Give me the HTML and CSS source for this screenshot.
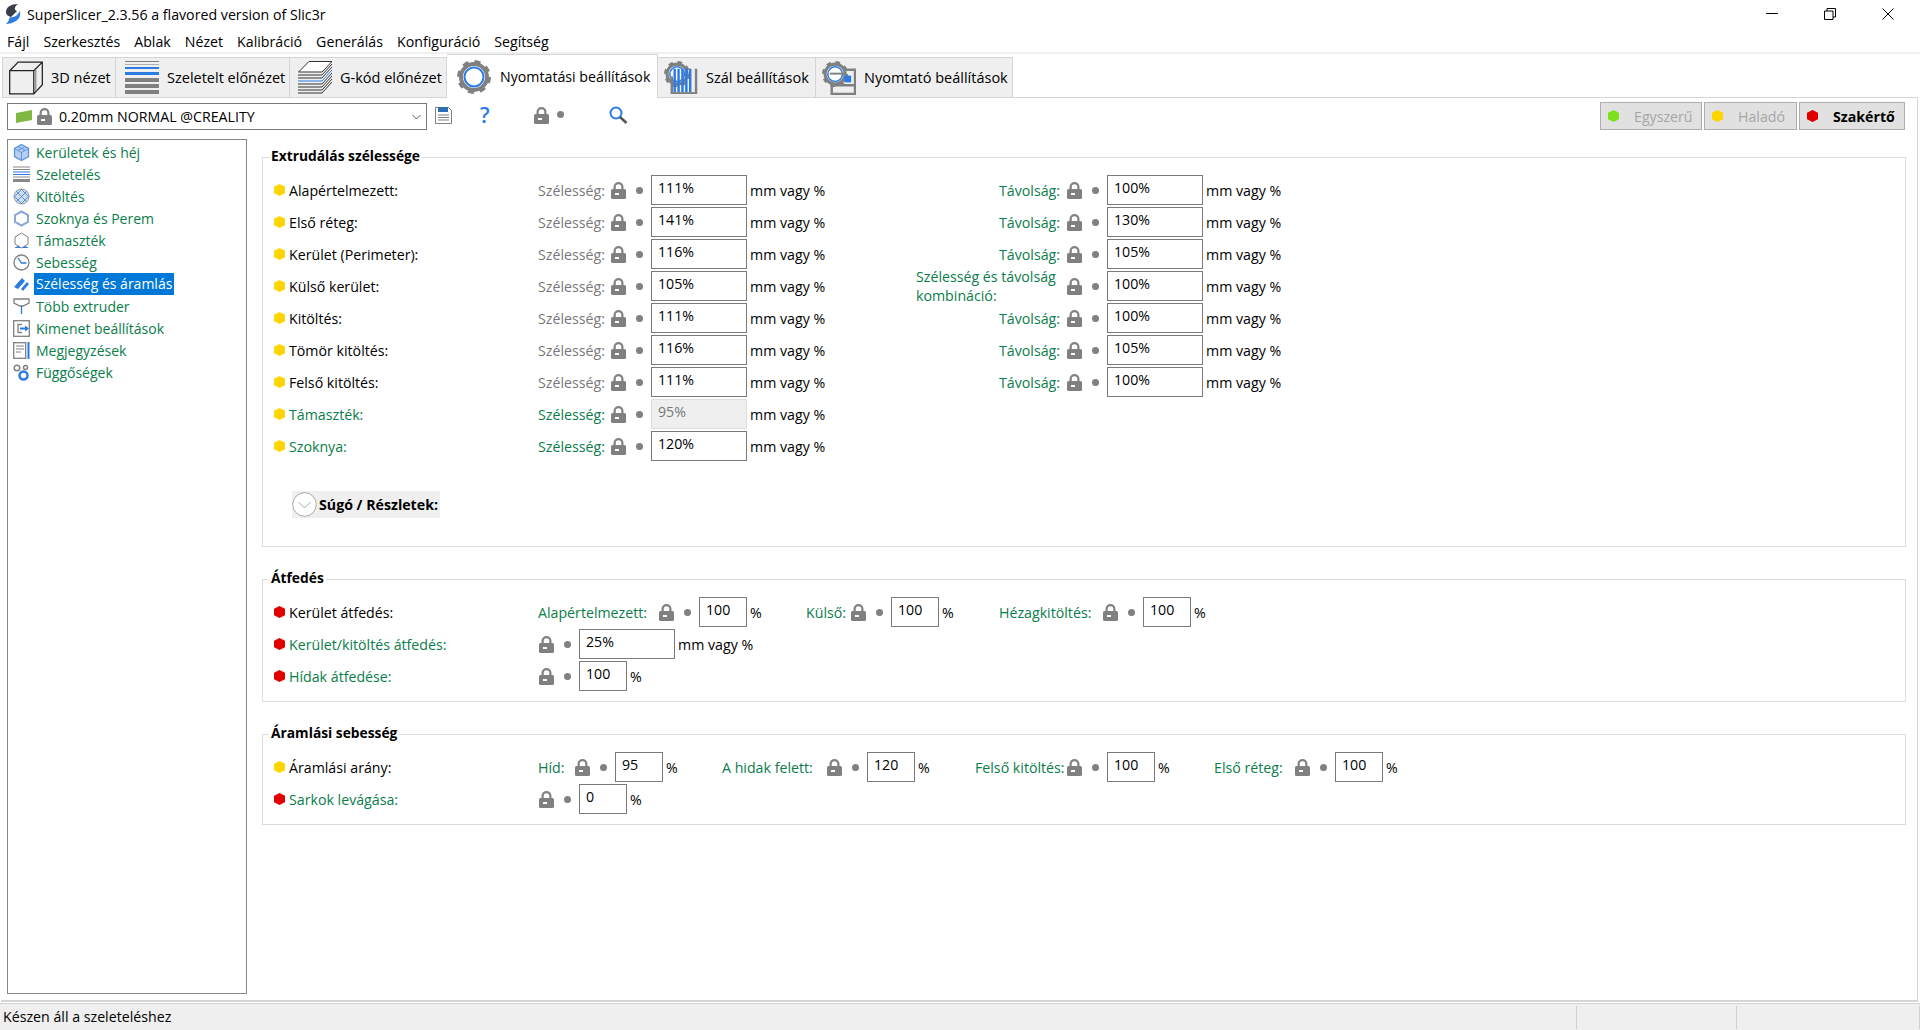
FILE: index.html
```html
<!DOCTYPE html>
<html lang="hu">
<head>
    <meta charset="UTF-8">
    <title>SuperSlicer_2.3.56 a flavored version of Slic3r</title>
    <link rel="stylesheet" href="styles.css">
</head>
<body>
<svg class="defs" width="0" height="0">
    <defs>
        <symbol id="lock" viewBox="0 0 15 17">
            <path d="M2.5 7V5a5 5 0 0 1 10 0v2h-2.200V5a2.800 2.800 0 0 0-5.600 0v2z" fill="#808080"/>
            <rect x="0" y="7" width="15" height="10" rx="1.500" fill="#808080"/>
            <rect x="4" y="11" width="4" height="2" fill="#fff"/>
        </symbol>
        <symbol id="gear" viewBox="0 0 34 34">
            <circle cx="17" cy="17" r="15" fill="none" stroke="#808080" stroke-width="4" stroke-dasharray="5.900 5.880"/>
            <circle cx="17" cy="17" r="13" fill="#fff" stroke="#808080" stroke-width="4"/>
            <circle cx="17" cy="17" r="9.500" fill="#fff" stroke="#2c7be5" stroke-width="2"/>
        </symbol>
    </defs>
</svg>

<header class="titlebar">
    <svg class="app-icon" viewBox="0 0 16 20">
        <path d="M13 0C6 0 1 3 1 8c0 3 2 4 5 5l6-6C9 6 9 3 13 0z" fill="#3a3f47"/>
        <path d="M15 7c1 5-1 8-4 10-3 2-7 3-10 3 2-2 3-4 4-7 4 1 7-1 10-6z" fill="#2f7de1"/>
    </svg>
    <span class="app-title">SuperSlicer_2.3.56 a flavored version of Slic3r</span>
    <div class="win-buttons">
        <svg viewBox="0 0 12 12" width="12" height="12"><path d="M0 5.500h12" stroke="#000" fill="none"/></svg>
        <svg viewBox="0 0 12 12" width="12" height="12"><path d="M.5 3h8.500v8.500H.5zM3 3V.5h8.500V9H9" stroke="#000" fill="none"/></svg>
        <svg viewBox="0 0 12 12" width="12" height="12"><path d="M.5.5l11 11M11.500.5l-11 11" stroke="#000" fill="none"/></svg>
    </div>
</header>

<nav class="menubar">
    <span>Fájl</span><span>Szerkesztés</span><span>Ablak</span><span>Nézet</span><span>Kalibráció</span><span>Generálás</span><span>Konfiguráció</span><span>Segítség</span>
</nav>

<div class="tabs">
    <div class="tab tab-3d">
        <svg class="tab-icon" viewBox="0 0 35 34">
            <path d="M.7 9.500L9.500.7h24.800V24L25.500 33.300H.7zM.7 9.500h24.800v23.800M25.500 9.500L34.300.7" fill="none" stroke="#222" stroke-width="1.300"/>
            <path d="M27.500 8.500v22" stroke="#999" stroke-width="1.500"/>
        </svg>
        <span>3D nézet</span>
    </div>
    <div class="tab tab-slice">
        <svg class="tab-icon" viewBox="0 0 34 34">
            <rect y="0" width="34" height="1" fill="#808080"/>
            <rect y="3" width="34" height="1" fill="#b0b0b0"/>
            <rect y="6" width="34" height="2" fill="#2c7be5"/>
            <rect y="11" width="34" height="3" fill="#2c7be5"/>
            <rect y="17" width="34" height="4" fill="#808080"/>
            <rect y="23" width="34" height="4" fill="#808080"/>
            <rect y="29" width="34" height="4" fill="#808080"/>
        </svg>
        <span>Szeletelt előnézet</span>
    </div>
    <div class="tab tab-gcode">
        <svg class="tab-icon" viewBox="0 0 34 34">
            <path d="M11 .5h23L24 11H.5z" fill="#fff" stroke="#333"/>
            <path d="M34 3L24 14H0M34 6L24 17H0" fill="none" stroke="#333"/>
            <path d="M34 9L24 20H0" fill="none" stroke="#2c7be5"/>
            <path d="M34 12L24 23H0M34 15L24 26H0M34 18L24 29H0M34 21L24 32H0" fill="none" stroke="#333"/>
        </svg>
        <span>G-kód előnézet</span>
    </div>
    <div class="tab tab-print active">
        <svg class="tab-icon"><use href="#gear"/></svg>
        <span>Nyomtatási beállítások</span>
    </div>
    <div class="tab tab-fil">
        <svg class="tab-icon" viewBox="0 0 35 35">
            <use href="#gear" width="27" height="27"/>
            <path d="M11 8v24M15 8v24M19 8v24M23 8v24M27 8v24" stroke="#2c7be5" stroke-width="2.500"/>
            <path d="M8 34V16M33 34V8" stroke="#808080" stroke-width="2.500"/>
            <path d="M8 33h25" stroke="#808080" stroke-width="2"/>
        </svg>
        <span>Szál beállítások</span>
    </div>
    <div class="tab tab-printer">
        <svg class="tab-icon" viewBox="0 0 35 35">
            <use href="#gear" width="27" height="27"/>
            <path d="M10 21v13h24V9H24M10 25h24" fill="none" stroke="#808080" stroke-width="2.500"/>
            <path d="M8 13h16" stroke="#808080" stroke-width="2"/>
            <rect x="23" y="15" width="7" height="7" fill="#2c7be5"/>
        </svg>
        <span>Nyomtató beállítások</span>
    </div>
    <div class="tabs-rest"></div>
</div>

<div class="page">
    <div class="toolbar">
        <div class="combo">
            <svg class="flag" viewBox="0 0 16 13"><path d="M0 3l16-3v10L0 13z" fill="#7fb842"/></svg>
            <svg class="lock"><use href="#lock"/></svg>
            <span class="combo-text">0.20mm NORMAL @CREALITY</span>
            <svg class="chevron" viewBox="0 0 9 6"><path d="M.5 1l4 4 4-4" fill="none" stroke="#555"/></svg>
        </div>
        <svg class="tool-save" viewBox="0 0 17 17">
            <path d="M.5.5h13l3 3v13H.5z" fill="#fff" stroke="#808080"/>
            <rect x="3" y="0" width="10" height="5" fill="#2c6fb5"/>
            <path d="M3 8h11M3 10.500h11M3 13h11" stroke="#808080"/>
        </svg>
        <span class="tool-help">?</span>
        <svg class="lock tool-lock"><use href="#lock"/></svg>
        <i class="dot tool-dot"></i>
        <svg class="tool-search" viewBox="0 0 19 18">
            <circle cx="7" cy="7" r="5.500" fill="none" stroke="#2c7be5" stroke-width="2"/>
            <path d="M11 11l6.500 6" stroke="#555" stroke-width="2.500"/>
        </svg>
        <div class="modes">
            <button class="mode mode-simple"><i class="hex green"></i>Egyszerű</button>
            <button class="mode mode-adv"><i class="hex yellow"></i>Haladó</button>
            <button class="mode mode-expert"><i class="hex red"></i>Szakértő</button>
        </div>
    </div>

    <div class="content">
        <ul class="tree">
            <li><svg class="ti" viewBox="0 0 17 17"><path d="M8.500.5l7 4v8l-7 4-7-4v-8z" fill="#b8d0f0" stroke="#5a94e0" stroke-width="1.300"/><path d="M1.500 4.500l7 4 7-4M8.500 8.500v8M5 2.500l7 4M12 2.500l-7 4" fill="none" stroke="#5a94e0"/></svg>Kerületek és héj</li>
            <li><svg class="ti" viewBox="0 0 17 17"><path d="M0 1h17M0 3.500h17" stroke="#888"/><path d="M0 6h17M0 8.500h17" stroke="#2c7be5"/><path d="M0 11h17" stroke="#888"/><path d="M0 14.500h17" stroke="#888" stroke-width="3"/></svg>Szeletelés</li>
            <li><svg class="ti" viewBox="0 0 17 17"><circle cx="8.500" cy="8.500" r="7.500" fill="#d0dcec" stroke="#999"/><path d="M3 3l11 11M8 1l7 7M1 8l7 7M14 3L3 14M9 1L1 9M16 8l-8 8" stroke="#5a94e0"/></svg>Kitöltés</li>
            <li><svg class="ti" viewBox="0 0 17 17"><path d="M8.500 1.500l6.500 3.500v7l-6.500 3.500L2 12V5z" fill="none" stroke="#8aa8d8" stroke-width="2"/></svg>Szoknya és Perem</li>
            <li><svg class="ti" viewBox="0 0 17 17"><path d="M8.500 1L15 5v7l-6.500 4L2 12V5z" fill="none" stroke="#808080"/><path d="M1 16l4-2 3 2zM9 16l3-2 4 2z" fill="#2c7be5"/></svg>Támaszték</li>
            <li><svg class="ti" viewBox="0 0 17 17"><circle cx="8.500" cy="8.500" r="7.500" fill="none" stroke="#808080" stroke-width="1.300"/><path d="M5 4l3.500 5h5" fill="none" stroke="#2c7be5" stroke-width="1.300"/></svg>Sebesség</li>
            <li class="selected"><svg class="ti" viewBox="0 0 17 17"><path d="M1 11l8-9 3 3-7 8zM8 13l6-7 2 2-6 7z" fill="#2c7be5"/></svg><span>Szélesség és áramlás</span></li>
            <li><svg class="ti" viewBox="0 0 17 17"><path d="M1 1h15v4l-6 3H7L1 5z" fill="none" stroke="#808080" stroke-width="1.300"/><path d="M8.500 8v8" stroke="#2c7be5" stroke-width="1.300"/></svg>Több extruder</li>
            <li><svg class="ti" viewBox="0 0 17 17"><rect x=".7" y=".7" width="15.600" height="15.600" fill="none" stroke="#808080" stroke-width="1.300"/><path d="M9 4.500H5v8h4" fill="none" stroke="#808080" stroke-width="1.300"/><path d="M7 8.500h6" stroke="#2c7be5" stroke-width="2"/><path d="M12 5.500l4 3-4 3z" fill="#2c7be5"/></svg>Kimenet beállítások</li>
            <li><svg class="ti" viewBox="0 0 17 17"><rect x=".7" y=".7" width="12" height="15.600" fill="none" stroke="#808080" stroke-width="1.300"/><path d="M3 4h8M3 7h8M3 10h5" stroke="#808080"/><path d="M15.500 0v17" stroke="#2c7be5" stroke-width="2"/></svg>Megjegyzések</li>
            <li><svg class="ti" viewBox="0 0 17 17"><circle cx="4" cy="4" r="2.800" fill="none" stroke="#808080" stroke-width="1.500"/><circle cx="12.500" cy="3.500" r="2" fill="none" stroke="#808080" stroke-width="1.500"/><circle cx="10.500" cy="11.500" r="4" fill="none" stroke="#2c7be5" stroke-width="2.500"/></svg>Függőségek</li>
        </ul>

        <div class="settings">
            <fieldset class="group">
                <legend>Extrudálás szélessége</legend>
                <div class="row">
                    <div class="name"><i class="hex yellow"></i>Alapértelmezett:</div>
                    <label class="flabel w-73">Szélesség:</label><svg class="lock"><use href="#lock"/></svg><i class="dot"></i><input class="in w-96" value="111%"><span class="unit w-80">mm vagy %</span>
                    <label class="flabel w-237 mod">Távolság:</label><svg class="lock"><use href="#lock"/></svg><i class="dot"></i><input class="in w-96" value="100%"><span class="unit">mm vagy %</span>
                </div>
                <div class="row">
                    <div class="name"><i class="hex yellow"></i>Első réteg:</div>
                    <label class="flabel w-73">Szélesség:</label><svg class="lock"><use href="#lock"/></svg><i class="dot"></i><input class="in w-96" value="141%"><span class="unit w-80">mm vagy %</span>
                    <label class="flabel w-237 mod">Távolság:</label><svg class="lock"><use href="#lock"/></svg><i class="dot"></i><input class="in w-96" value="130%"><span class="unit">mm vagy %</span>
                </div>
                <div class="row">
                    <div class="name"><i class="hex yellow"></i>Kerület (Perimeter):</div>
                    <label class="flabel w-73">Szélesség:</label><svg class="lock"><use href="#lock"/></svg><i class="dot"></i><input class="in w-96" value="116%"><span class="unit w-80">mm vagy %</span>
                    <label class="flabel w-237 mod">Távolság:</label><svg class="lock"><use href="#lock"/></svg><i class="dot"></i><input class="in w-96" value="105%"><span class="unit">mm vagy %</span>
                </div>
                <div class="row">
                    <div class="name"><i class="hex yellow"></i>Külső kerület:</div>
                    <label class="flabel w-73">Szélesség:</label><svg class="lock"><use href="#lock"/></svg><i class="dot"></i><input class="in w-96" value="105%"><span class="unit w-80">mm vagy %</span>
                    <label class="flabel w-237 mod two-line">Szélesség és távolság<br>kombináció:</label><svg class="lock"><use href="#lock"/></svg><i class="dot"></i><input class="in w-96" value="100%"><span class="unit">mm vagy %</span>
                </div>
                <div class="row">
                    <div class="name"><i class="hex yellow"></i>Kitöltés:</div>
                    <label class="flabel w-73">Szélesség:</label><svg class="lock"><use href="#lock"/></svg><i class="dot"></i><input class="in w-96" value="111%"><span class="unit w-80">mm vagy %</span>
                    <label class="flabel w-237 mod">Távolság:</label><svg class="lock"><use href="#lock"/></svg><i class="dot"></i><input class="in w-96" value="100%"><span class="unit">mm vagy %</span>
                </div>
                <div class="row">
                    <div class="name"><i class="hex yellow"></i>Tömör kitöltés:</div>
                    <label class="flabel w-73">Szélesség:</label><svg class="lock"><use href="#lock"/></svg><i class="dot"></i><input class="in w-96" value="116%"><span class="unit w-80">mm vagy %</span>
                    <label class="flabel w-237 mod">Távolság:</label><svg class="lock"><use href="#lock"/></svg><i class="dot"></i><input class="in w-96" value="105%"><span class="unit">mm vagy %</span>
                </div>
                <div class="row">
                    <div class="name"><i class="hex yellow"></i>Felső kitöltés:</div>
                    <label class="flabel w-73">Szélesség:</label><svg class="lock"><use href="#lock"/></svg><i class="dot"></i><input class="in w-96" value="111%"><span class="unit w-80">mm vagy %</span>
                    <label class="flabel w-237 mod">Távolság:</label><svg class="lock"><use href="#lock"/></svg><i class="dot"></i><input class="in w-96" value="100%"><span class="unit">mm vagy %</span>
                </div>
                <div class="row">
                    <div class="name mod"><i class="hex yellow"></i>Támaszték:</div>
                    <label class="flabel w-73 mod">Szélesség:</label><svg class="lock"><use href="#lock"/></svg><i class="dot"></i><input class="in w-96 disabled" value="95%" disabled><span class="unit w-80">mm vagy %</span>
                </div>
                <div class="row">
                    <div class="name mod"><i class="hex yellow"></i>Szoknya:</div>
                    <label class="flabel w-73 mod">Szélesség:</label><svg class="lock"><use href="#lock"/></svg><i class="dot"></i><input class="in w-96" value="120%"><span class="unit w-80">mm vagy %</span>
                </div>
                <div class="help">
                    <svg class="help-icon" viewBox="0 0 25 25"><circle cx="12.500" cy="12.500" r="11.800" fill="#fff" stroke="#aaa"/><path d="M6.500 10l6 6 6-6" fill="none" stroke="#aaa"/></svg>
                    <span>Súgó / Részletek:</span>
                </div>
            </fieldset>

            <fieldset class="group group-short">
                <legend>Átfedés</legend>
                <div class="row">
                    <div class="name"><i class="hex red"></i>Kerület átfedés:</div>
                    <label class="flabel w-121 mod left">Alapértelmezett:</label><svg class="lock"><use href="#lock"/></svg><i class="dot"></i><input class="in w-48" value="100"><span class="unit w-56">%</span>
                    <label class="flabel w-45 mod left">Külső:</label><svg class="lock"><use href="#lock"/></svg><i class="dot"></i><input class="in w-48" value="100"><span class="unit w-57">%</span>
                    <label class="flabel w-104 mod left">Hézagkitöltés:</label><svg class="lock"><use href="#lock"/></svg><i class="dot"></i><input class="in w-48" value="100"><span class="unit">%</span>
                </div>
                <div class="row">
                    <div class="name mod"><i class="hex red"></i>Kerület/kitöltés átfedés:</div>
                    <svg class="lock nudge"><use href="#lock"/></svg><i class="dot"></i><input class="in w-96" value="25%"><span class="unit">mm vagy %</span>
                </div>
                <div class="row">
                    <div class="name mod"><i class="hex red"></i>Hídak átfedése:</div>
                    <svg class="lock nudge"><use href="#lock"/></svg><i class="dot"></i><input class="in w-48" value="100"><span class="unit">%</span>
                </div>
            </fieldset>

            <fieldset class="group group-short">
                <legend>Áramlási sebesség</legend>
                <div class="row">
                    <div class="name"><i class="hex yellow"></i>Áramlási arány:</div>
                    <label class="flabel w-37 mod left">Híd:</label><svg class="lock"><use href="#lock"/></svg><i class="dot"></i><input class="in w-48" value="95"><span class="unit w-56">%</span>
                    <label class="flabel w-105 mod left">A hidak felett:</label><svg class="lock"><use href="#lock"/></svg><i class="dot"></i><input class="in w-48" value="120"><span class="unit w-57">%</span>
                    <label class="flabel w-92 mod left">Felső kitöltés:</label><svg class="lock"><use href="#lock"/></svg><i class="dot"></i><input class="in w-48" value="100"><span class="unit w-56">%</span>
                    <label class="flabel w-81 mod left">Első réteg:</label><svg class="lock"><use href="#lock"/></svg><i class="dot"></i><input class="in w-48" value="100"><span class="unit">%</span>
                </div>
                <div class="row">
                    <div class="name mod"><i class="hex red"></i>Sarkok levágása:</div>
                    <svg class="lock nudge"><use href="#lock"/></svg><i class="dot"></i><input class="in w-48" value="0"><span class="unit">%</span>
                </div>
            </fieldset>
        </div>
    </div>
</div>

<footer class="statusbar">
    <span class="status-text">Készen áll a szeleteléshez</span>
    <span class="status-cell status-a"></span>
    <span class="status-cell status-b"></span>
</footer>
</body>
</html>
```

FILE: styles.css
```css
html, body {
    height: 100%;
    margin: 0;
}

body {
    display: flex;
    flex-direction: column;
    height: 1030px;
    overflow: hidden;
    background: #fff;
    color: #000;
    font-family: "Open Sans", "Noto Sans", sans-serif;
    font-size: 14.2px;
}

.defs {
    display: none;
}

.titlebar {
    display: flex;
    align-items: center;
    box-sizing: border-box;
    height: 30px;
    flex: none;
    padding: 0 0 2px 5px;
}

.app-icon {
    width: 16px;
    height: 20px;
}

.app-title {
    margin-left: 6px;
}

.win-buttons {
    display: flex;
    margin-left: auto;
    gap: 46px;
    padding-right: 26px;
}

.menubar {
    display: flex;
    align-items: center;
    height: 22px;
    flex: none;
    padding-left: 7px;
    border-bottom: 2px solid #f0f0f0;
}

.menubar span {
    margin-right: 14px;
}

.tabs {
    display: flex;
    align-items: flex-end;
    height: 44px;
    flex: none;
    padding-left: 2px;
}

.tab {
    display: flex;
    align-items: center;
    box-sizing: border-box;
    height: 41px;
    background: #efefef;
    border: 1px solid #d5d5d5;
    border-left: none;
    font-size: 14.5px;
    white-space: nowrap;
}

.tab:first-child {
    border-left: 1px solid #d5d5d5;
}

.tab-3d { width: 114px; padding-left: 6px; }
.tab-slice { width: 174px; padding-left: 9px; }
.tab-gcode { width: 157px; padding-left: 8px; }
.tab-print { width: 211px; padding-left: 10px; font-size: 14.2px; }
.tab-fil { width: 158px; padding-left: 6px; }
.tab-printer { width: 197px; padding-left: 6px; }

.tab.active {
    height: 44px;
    background: #fff;
    border-bottom: none;
}

.tab-icon {
    width: 34px;
    height: 34px;
    margin-right: 8px;
    flex: none;
}

.tab-print .tab-icon {
    margin-right: 9px;
}

.tabs-rest {
    flex: 1;
    margin-right: 2px;
    border-bottom: 1px solid #d5d5d5;
}

.page {
    flex: 1;
    display: flex;
    flex-direction: column;
    min-height: 0;
    margin: 0 2px 0 1px;
    border-right: 1px solid #d5d5d5;
    border-bottom: 2px solid #d5d5d5;
}

.toolbar {
    display: flex;
    align-items: flex-start;
    height: 28px;
    flex: none;
    margin-top: 5px;
    padding-left: 6px;
}

.combo {
    display: flex;
    align-items: center;
    box-sizing: border-box;
    width: 420px;
    height: 27px;
    border: 1px solid #7a7a7a;
    padding-left: 8px;
}

.flag {
    width: 16px;
    height: 13px;
}

.combo .lock {
    margin-left: 5px;
    margin-right: 7px;
}

.chevron {
    width: 9px;
    height: 6px;
    margin-left: auto;
    margin-right: 5px;
}

.lock {
    width: 15px;
    height: 17px;
    flex: none;
}

.dot {
    display: block;
    flex: none;
    width: 7px;
    height: 7px;
    margin: 0 8px 0 10px;
    border-radius: 50%;
    background: #808080;
}

.tool-save {
    width: 17px;
    height: 17px;
    margin: 4px 0 0 8px;
}

.tool-help {
    margin-left: 28px;
    width: 12px;
    color: #2c7be5;
    font-size: 21px;
    font-weight: 600;
    line-height: 24px;
}

.tool-lock {
    margin: 4px 0 0 42px;
}

.tool-dot {
    margin: 8px 0 0 8px;
}

.tool-search {
    width: 19px;
    height: 18px;
    margin: 3px 0 0 45px;
}

.modes {
    display: flex;
    margin: -1px 12px 0 auto;
    gap: 2px;
}

.mode {
    display: flex;
    align-items: center;
    box-sizing: border-box;
    height: 28px;
    padding: 0 0 0 7px;
    background: #e1e1e1;
    border: 1px solid #adadad;
    color: #a6a6a6;
    font: inherit;
}

.mode .hex {
    margin-right: 15px;
}

.mode-simple { width: 102px; }
.mode-adv { width: 93px; }
.mode-expert { width: 106px; color: #000; font-weight: 700; }

.hex {
    display: block;
    flex: none;
    width: 11px;
    height: 12px;
    clip-path: polygon(50% 0, 100% 22%, 100% 78%, 50% 100%, 0 78%, 0 22%);
}

.green { background: #7fe020; }
.yellow { background: #ffd500; }
.red { background: #e00000; }

.content {
    flex: 1;
    display: flex;
    min-height: 0;
    padding: 8px 0 6px 6px;
}

.tree {
    box-sizing: border-box;
    width: 240px;
    flex: none;
    margin: 0;
    padding: 1px 0 0 5px;
    list-style: none;
    border: 1px solid #828790;
    color: #0a7d4a;
    font-size: 14px;
}

.tree li {
    display: flex;
    align-items: center;
    height: 22px;
}

.ti {
    width: 17px;
    height: 17px;
    margin-right: 6px;
    flex: none;
}

.tree .selected span {
    margin-left: -2px;
    padding: 0 2px;
    background: #0078d7;
    color: #fff;
    line-height: 22px;
}

.settings {
    flex: 1;
    margin: 8px 11px 0 15px;
}

.group {
    margin: 0;
    padding: 8px 0 28px 11px;
    border: 1px solid #dcdcdc;
    min-width: 0;
}

.group + .group {
    margin-top: 22px;
}

.group-short {
    padding-bottom: 8px;
}

legend {
    padding: 0 2px 2px;
    margin-left: -5px;
    font-size: 13.8px;
    font-weight: 700;
    line-height: 18px;
}

.row {
    display: flex;
    align-items: center;
    height: 30px;
    margin-bottom: 2px;
    white-space: nowrap;
}

.name {
    display: flex;
    align-items: center;
    flex: none;
    width: 264px;
}

.name .hex {
    margin-right: 4px;
}

.mod {
    color: #0a7d4a;
}

.flabel {
    flex: none;
    color: #777;
    text-align: right;
}

.flabel.mod {
    color: #0a7d4a;
}

.flabel.left {
    text-align: left;
}

.two-line {
    padding-left: 86px;
    box-sizing: border-box;
    text-align: left;
    line-height: 19px;
}

.w-37 { width: 37px; }
.w-45 { width: 45px; }
.w-56 { width: 56px; }
.w-57 { width: 57px; }
.w-73 { width: 73px; }
.w-80 { width: 80px; }
.w-81 { width: 81px; }
.w-92 { width: 92px; }
.w-104 { width: 104px; }
.w-105 { width: 105px; }
.w-121 { width: 121px; }
.w-237 { width: 237px; }

.flabel:not(.left):not(.two-line) {
    padding-right: 7px;
    box-sizing: border-box;
}

.nudge {
    margin-left: 1px;
}

.in {
    display: block;
    flex: none;
    box-sizing: border-box;
    height: 30px;
    padding: 0 6px 5px;
    border: 1px solid #7a7a7a;
    background: #fff;
    color: #000;
    font: inherit;
    outline: none;
}

.in.w-96 { width: 96px; }
.in.w-48 { width: 48px; }

.in.disabled {
    background: #efefef;
    border: 1px solid #dcdcdc;
    color: #777;
}

.unit {
    flex: none;
    margin-left: 3px;
}

.help {
    display: flex;
    align-items: center;
    width: 148px;
    height: 27px;
    margin: 30px 0 0 18px;
    background: #efefef;
    font-weight: 700;
    white-space: nowrap;
}

.help-icon {
    width: 25px;
    height: 25px;
    margin-right: 2px;
    flex: none;
}

.statusbar {
    display: flex;
    align-items: stretch;
    height: 27px;
    flex: none;
    box-sizing: border-box;
    margin-top: 1px;
    padding-top: 1px;
    background: #efefef;
    border-top: 1px solid #d5d5d5;
}

.status-text {
    flex: 1;
    padding-left: 3px;
    line-height: 24px;
}

.status-cell {
    box-sizing: border-box;
    margin: 1px 0;
    border-left: 1px solid #d0d0d0;
}

.status-a { width: 160px; }
.status-b { width: 184px; border-right: 1px solid #d0d0d0; }
```
